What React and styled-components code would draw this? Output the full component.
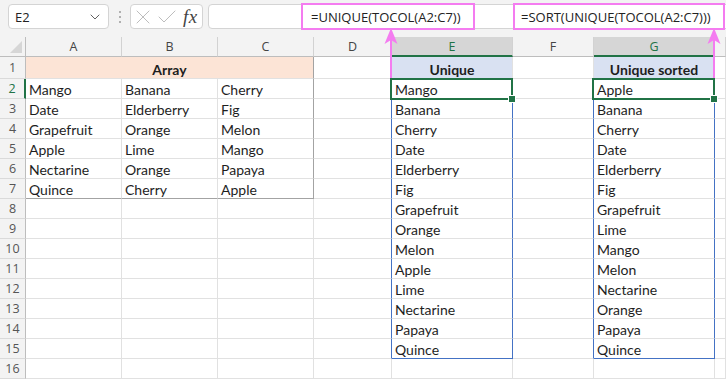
import React from 'react';
import styled, { createGlobalStyle } from 'styled-components';
import { ChevronDown, X, Check } from 'lucide-react';

const GRID = '#e1e1e1';
const TABLE = '#a3a3a3';
const SPILL = '#4472c4';
const GREEN = '#217346';
const PINK = '#f47cf0';
const PEACH = '#fce4d6';
const BLUE = '#d9e1f2';

const COLS = ['A', 'B', 'C', 'D', 'E', 'F', 'G', 'H'];

const arrayData = [
    ['Mango', 'Banana', 'Cherry'],
    ['Date', 'Elderberry', 'Fig'],
    ['Grapefruit', 'Orange', 'Melon'],
    ['Apple', 'Lime', 'Mango'],
    ['Nectarine', 'Orange', 'Papaya'],
    ['Quince', 'Cherry', 'Apple'],
];

const unique = ['Mango', 'Banana', 'Cherry', 'Date', 'Elderberry', 'Fig', 'Grapefruit',
    'Orange', 'Melon', 'Apple', 'Lime', 'Nectarine', 'Papaya', 'Quince'];

const sorted = ['Apple', 'Banana', 'Cherry', 'Date', 'Elderberry', 'Fig', 'Grapefruit',
    'Lime', 'Mango', 'Melon', 'Nectarine', 'Orange', 'Papaya', 'Quince'];

const rows = Array.from({ length: 16 }, (_, i) => i + 1);

const renderRow = (r) => {
    if (r === 1) {
        return [
            <Cell key="A" $span={3} $fill={PEACH} $bold $center $rc={TABLE}>Array</Cell>,
            <Cell key="D" />,
            <Cell key="E" $fill={BLUE} $bold $center>Unique</Cell>,
            <Cell key="F" />,
            <Cell key="G" $fill={BLUE} $bold $center>Unique sorted</Cell>,
            <Cell key="H" />,
        ];
    }

    const inSpill = r >= 2 && r <= 15;
    const inTable = r <= 7;

    return COLS.map((col, i) => {
        switch (col) {
            case 'A':
            case 'B':
            case 'C':
                return (
                    <Cell
                        key={col}
                        $rc={col === 'C' && inTable ? TABLE : undefined}
                        $bc={r === 7 ? TABLE : undefined}
                    >
                        {inTable ? arrayData[r - 2][i] : ''}
                    </Cell>
                );

            case 'D':
            case 'F':
                return <Cell key={col} $rc={inSpill ? SPILL : undefined} />;

            case 'E':
            case 'G':
                return (
                    <Cell
                        key={col}
                        $rc={inSpill ? SPILL : undefined}
                        $bc={r === 15 ? SPILL : undefined}
                    >
                        {inSpill ? (col === 'E' ? unique : sorted)[r - 2] : ''}
                        {r === 2 ? <Selection><Handle /></Selection> : null}
                    </Cell>
                );

            default:
                return <Cell key={col} />;
        }
    });
};

export default function App() {
    return (
        <>
            <GlobalStyle />
            <Window>
                <Toolbar>
                    <NameBox>
                        <span>E2</span>
                        <ChevronDown size={16} strokeWidth={1.4} color="#555" />
                    </NameBox>
                    <Grip><i /><i /><i /></Grip>
                    <FxBox>
                        <X size={24} strokeWidth={1} color="#bdbdbd" />
                        <Check size={24} strokeWidth={1} color="#bdbdbd" />
                        <Fx>fx</Fx>
                    </FxBox>
                    <FormulaBar>
                        <Callout $offset={92} $width={174} $pad={8}>=UNIQUE(TOCOL(A2:C7))</Callout>
                        <Callout $offset={38} $width={212} $pad={6}>=SORT(UNIQUE(TOCOL(A2:C7)))</Callout>
                    </FormulaBar>
                </Toolbar>

                <Sheet>
                    <Corner />
                    {COLS.map(c => (
                        <ColHead key={c} $active={c === 'E' || c === 'G'}>
                            {c === 'H' ? '' : c}
                        </ColHead>
                    ))}
                    {rows.map(r => (
                        <React.Fragment key={r}>
                            <RowHead $active={r === 2}>{r}</RowHead>
                            {renderRow(r)}
                        </React.Fragment>
                    ))}
                </Sheet>

                <ArrowLayer width="726" height="380" viewBox="0 0 726 380">
                    {[391, 714].map(x => (
                        <g key={x}>
                            <line x1={x} y1={40} x2={x} y2={78} stroke={PINK} strokeWidth="2" />
                            <path d={`M${x} 28 L${x + 6.5} 44 L${x} 40 L${x - 6.5} 44 Z`} fill={PINK} />
                        </g>
                    ))}
                </ArrowLayer>
            </Window>
        </>
    );
}


const GlobalStyle = createGlobalStyle`
    html, body {
        margin: 0;
        padding: 0;
        background: #fff;
    }
    body {
        font-family: "Open Sans", "Noto Sans", sans-serif;
    }
`;

const Window = styled.div`
    position: relative;
    width: 726px;
    height: 380px;
    overflow: hidden;
    display: flex;
    flex-direction: column;
    background: #fff;
`;

const Toolbar = styled.div`
    height: 37px;
    flex-shrink: 0;
    display: flex;
    align-items: flex-start;
    padding: 4px 0 0 8px;
    box-sizing: border-box;
    background: #f3f3f3;
`;

const Box = styled.div`
    height: 25px;
    box-sizing: border-box;
    background: #fff;
    border: 1px solid #d4d4d4;
    border-radius: 4px;
    display: flex;
    align-items: center;
`;

const NameBox = styled(Box)`
    width: 101px;
    justify-content: space-between;
    padding: 0 5px 0 6px;
    font-size: 13px;
    color: #222;
`;

const Grip = styled.div`
    width: 21px;
    height: 25px;
    display: flex;
    flex-direction: column;
    align-items: center;
    justify-content: center;
    gap: 3px;

    i {
        width: 2px;
        height: 2px;
        border-radius: 1px;
        background: #9a9a9a;
    }
`;

const FxBox = styled(Box)`
    width: 73px;
    padding-left: 0;
    gap: 0;
`;

const Fx = styled.span`
    margin-left: 4px;
    font-family: "Liberation Serif", "DejaVu Serif", serif;
    font-style: italic;
    font-size: 19px;
    color: #444;
    letter-spacing: 0.5px;
`;

const FormulaBar = styled(Box)`
    flex: 1;
    margin: 0 -30px 0 5px;
`;

const Callout = styled.div`
    flex-shrink: 0;
    width: ${p => p.$width}px;
    height: 27px;
    margin-left: ${p => p.$offset}px;
    box-sizing: border-box;
    border: 2px solid ${PINK};
    padding-left: ${p => p.$pad}px;
    display: flex;
    align-items: center;
    font-size: 13px;
    color: #222;
    white-space: nowrap;
    background: #fff;
`;

const Sheet = styled.div`
    display: grid;
    grid-template-columns: 26px 96px 96px 96px 78px 121px 81px 121px 1fr;
    grid-template-rows: 20px 22px repeat(15, 20px);
`;

const Corner = styled.div`
    position: relative;
    background: #f3f3f3;
    border-right: 1px solid #bdbdbd;
    border-bottom: 1px solid #bdbdbd;

    &::after {
        content: '';
        position: absolute;
        right: 3px;
        bottom: 3px;
        border-style: solid;
        border-width: 0 0 12px 12px;
        border-color: transparent transparent #d6d6d6 transparent;
    }
`;

const ColHead = styled.div`
    box-sizing: border-box;
    background: ${p => p.$active ? '#d6d6d6' : '#f3f3f3'};
    color: ${p => p.$active ? GREEN : '#444'};
    border-right: 1px solid #d2d2d2;
    border-bottom: ${p => p.$active ? `2px solid ${GREEN}` : '1px solid #bdbdbd'};
    display: flex;
    align-items: center;
    justify-content: center;
    font-size: 12.5px;
`;

const RowHead = styled.div`
    box-sizing: border-box;
    background: #f3f3f3;
    color: ${p => p.$active ? GREEN : '#555'};
    border-right: ${p => p.$active ? `2px solid ${GREEN}` : '1px solid #bdbdbd'};
    border-bottom: 1px solid #dadada;
    display: flex;
    align-items: center;
    justify-content: center;
    font-size: 12.5px;
`;

const Cell = styled.div`
    position: relative;
    box-sizing: border-box;
    grid-column: ${p => p.$span ? `span ${p.$span}` : 'auto'};
    background: ${p => p.$fill || '#fff'};
    border-right: 1px solid ${p => p.$rc || GRID};
    border-bottom: 1px solid ${p => p.$bc || GRID};
    padding: 0 3px;
    display: flex;
    align-items: flex-end;
    justify-content: ${p => p.$center ? 'center' : 'flex-start'};
    font-family: Lato, "Open Sans", sans-serif;
    font-size: 14px;
    line-height: 17px;
    font-weight: ${p => p.$bold ? 700 : 400};
    color: #1e1e1e;
    white-space: nowrap;
`;

const Selection = styled.div`
    position: absolute;
    left: -2px;
    top: -1px;
    right: -1px;
    bottom: -2px;
    border: 2px solid ${GREEN};
    z-index: 2;
    pointer-events: none;
`;

const Handle = styled.div`
    position: absolute;
    right: -5px;
    bottom: -5px;
    width: 6px;
    height: 6px;
    background: ${GREEN};
    border: 1px solid #fff;
`;

const ArrowLayer = styled.svg`
    position: absolute;
    left: 0;
    top: 0;
    z-index: 5;
    pointer-events: none;
`;
